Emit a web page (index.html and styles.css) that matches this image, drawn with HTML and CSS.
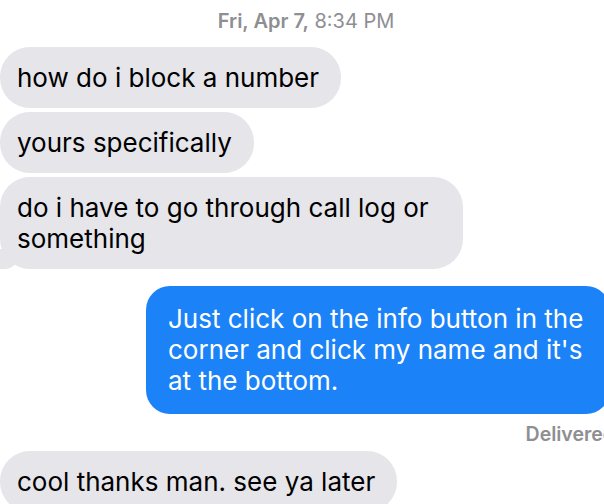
FILE: index.html
```html
<!DOCTYPE html>
<html lang="en">
<head>
    <meta charset="UTF-8">
    <title>Messages</title>
    <meta name="viewport" content="width=device-width, initial-scale=1.0">
    <link rel="stylesheet" href="styles.css">
</head>
<body>

<div class="thread">
    <div class="stamp"><b>Fri, Apr 7,</b> 8:34 PM</div>

    <!-- incoming group -->
    <div class="bubble recebida">how do i block a number</div>
    <div class="bubble recebida">yours specifically</div>
    <div class="bubble recebida cauda">do i have to go through call log or something</div>

    <!-- outgoing -->
    <div class="bubble enviada">Just click on the info button in the corner and click my name and it's at the bottom.</div>
    <div class="status">Delivered</div>

    <div class="bubble recebida ultima">cool thanks man. see ya later</div>
</div>

</body>
</html>
```
FILE: styles.css
```css
body {
    font-family: Inter, "Noto Sans", sans-serif;
    background-color: #ffffff;
    margin: 0;
    overflow: hidden;
}
.thread {
    display: flex;
    flex-direction: column;
    align-items: flex-start;
}
.stamp {
    align-self: stretch;
    text-align: center;
    color: #8e8e93;
    font-size: 20px;
    line-height: 22px;
    padding: 10px 0 15px 8px;
}
.stamp b {
    font-weight: 600;
}
.bubble {
    font-size: 26px;
    line-height: 31px;
    padding: 15px 22px 15px 17px;
    border-radius: 30px;
    margin-bottom: 4px;
    position: relative;
}
.recebida {
    background: #e5e5ea;
    color: #000;
    max-width: 424px;
}
.cauda::before {
    content: "";
    position: absolute;
    left: -4px;
    bottom: 0;
    width: 22px;
    height: 20px;
    background: #e5e5ea;
    border-bottom-right-radius: 14px 12px;
}
.cauda::after {
    content: "";
    position: absolute;
    left: -14px;
    bottom: 0;
    width: 14px;
    height: 20px;
    background: #fff;
    border-bottom-right-radius: 10px;
}
.enviada {
    align-self: flex-end;
    background: #1b83f7;
    color: #fff;
    margin-top: 13px;
    margin-right: -6px;
    padding: 17px 22px 18px 22px;
    border-radius: 24px;
    width: 420px;
}
.status {
    align-self: flex-end;
    margin-right: -11px;
    color: #8e8e93;
    font-size: 19.5px;
    line-height: 22px;
    font-weight: 600;
    padding: 5px 0 6px;
}
.ultima {
    margin-bottom: 0;
}
```
